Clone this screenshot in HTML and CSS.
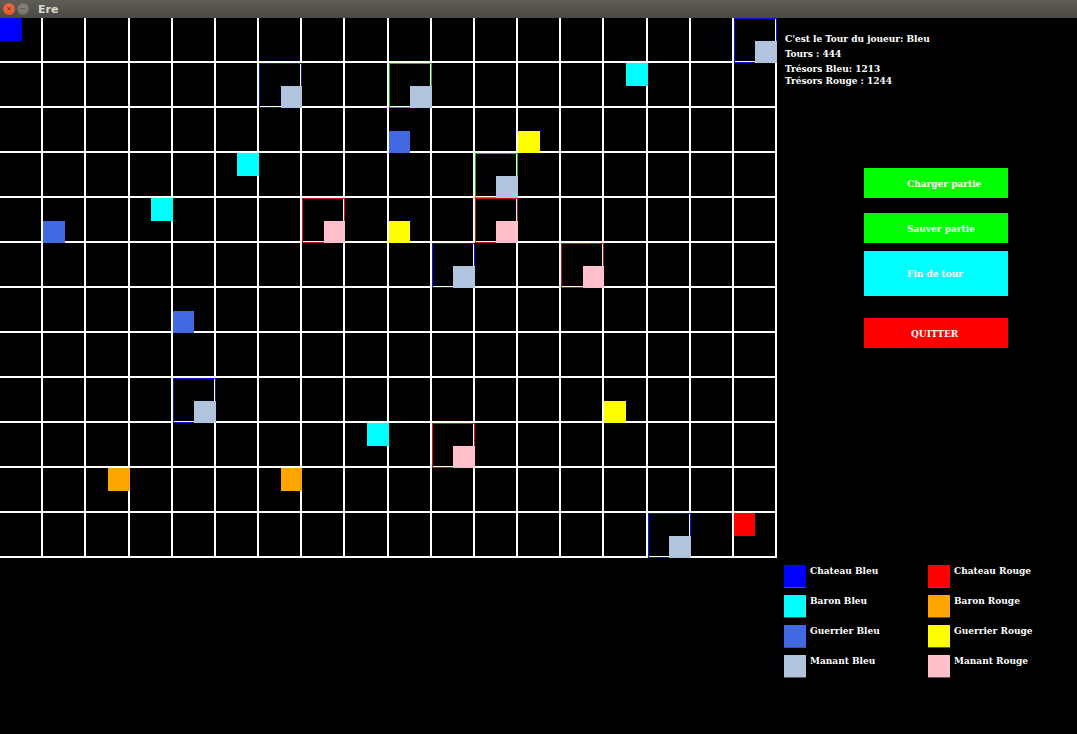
FILE: index.html
```html
<!DOCTYPE html>
<html lang="fr">
<head>
  <meta charset="UTF-8" />
  <title>Ere</title>
  <link rel="stylesheet" href="styles.css">
</head>
<body>
  <div class="titlebar">
    <span class="win-btn close">&#x2715;</span>
    <span class="win-btn minimize">&#x2212;</span>
    <span class="title">Ere</span>
  </div>

  <div class="window">
    <div id="board" class="board"></div>

    <div class="side">
      <div class="info">
        <div class="info-line">C'est le Tour du joueur: Bleu</div>
        <div class="info-line">Tours : 444</div>
        <div class="info-line">Trésors Bleu: 1213</div>
        <div class="info-line tight">Trésors Rouge : 1244</div>
      </div>

      <div class="actions">
        <button class="btn green load">Charger partie</button>
        <button class="btn green save">Sauver partie</button>
        <button class="btn cyan end">Fin de tour</button>
        <button class="btn red quit">QUITTER</button>
      </div>

      <div class="legend">
        <div class="legend-item"><span class="swatch chateau-bleu"></span>Chateau Bleu</div>
        <div class="legend-item"><span class="swatch chateau-rouge"></span>Chateau Rouge</div>
        <div class="legend-item"><span class="swatch baron-bleu"></span>Baron Bleu</div>
        <div class="legend-item"><span class="swatch baron-rouge"></span>Baron Rouge</div>
        <div class="legend-item"><span class="swatch guerrier-bleu"></span>Guerrier Bleu</div>
        <div class="legend-item"><span class="swatch guerrier-rouge"></span>Guerrier Rouge</div>
        <div class="legend-item"><span class="swatch manant-bleu"></span>Manant Bleu</div>
        <div class="legend-item"><span class="swatch manant-rouge"></span>Manant Rouge</div>
      </div>
    </div>
  </div>

  <script>
    const COLS = 18;
    const ROWS = 12;

    // [col, row, unit, owned-cell outline]
    const pieces = [
      [0, 0, 'chateau-bleu'],
      [17, 0, 'manant-bleu', 'own-blue'],
      [6, 1, 'manant-bleu', 'own-blue'],
      [9, 1, 'manant-bleu', 'own-green'],
      [14, 1, 'baron-bleu'],
      [9, 2, 'guerrier-bleu'],
      [12, 2, 'guerrier-rouge'],
      [5, 3, 'baron-bleu'],
      [11, 3, 'manant-bleu', 'own-green'],
      [3, 4, 'baron-bleu'],
      [1, 4, 'guerrier-bleu'],
      [7, 4, 'manant-rouge', 'own-red'],
      [9, 4, 'guerrier-rouge'],
      [11, 4, 'manant-rouge', 'own-red'],
      [10, 5, 'manant-bleu', 'own-blue'],
      [13, 5, 'manant-rouge', 'own-red'],
      [4, 6, 'guerrier-bleu'],
      [4, 8, 'manant-bleu', 'own-blue'],
      [14, 8, 'guerrier-rouge'],
      [8, 9, 'baron-bleu'],
      [10, 9, 'manant-rouge', 'own-red'],
      [2, 10, 'baron-rouge'],
      [6, 10, 'baron-rouge'],
      [15, 11, 'manant-bleu', 'own-blue'],
      [17, 11, 'chateau-rouge']
    ];

    const board = document.getElementById('board');
    const cells = [];
    for (let r = 0; r < ROWS; r++) {
      for (let c = 0; c < COLS; c++) {
        const cell = document.createElement('div');
        cell.className = 'cell';
        board.appendChild(cell);
        cells.push(cell);
      }
    }

    for (const [c, r, unit, own] of pieces) {
      const cell = cells[r * COLS + c];
      if (own) cell.classList.add(own);
      const p = document.createElement('span');
      p.className = 'piece ' + unit;
      cell.appendChild(p);
    }
  </script>
</body>
</html>
```

FILE: styles.css
```css
body {
  margin: 0;
  background: #000;
  color: #fff;
  font-family: "DejaVu Serif", serif;
  width: 1077px;
  height: 734px;
  overflow: hidden;
}

.titlebar {
  height: 18px;
  display: flex;
  align-items: center;
  background: linear-gradient(#5f5d58, #4a4944);
  padding-left: 3px;
  font-family: "DejaVu Sans", sans-serif;
}
.win-btn {
  width: 12px;
  height: 12px;
  border-radius: 50%;
  margin-right: 2px;
  font-size: 7px;
  line-height: 12px;
  text-align: center;
  font-weight: bold;
}
.close {
  background: radial-gradient(circle at 50% 40%, #f3774a, #d9461a);
  color: #6b2610;
}
.minimize {
  background: radial-gradient(circle at 50% 40%, #8a8883, #67655f);
  color: #4a4944;
}
.title {
  margin-left: 7px;
  font-size: 11px;
  font-weight: bold;
  color: #dcd8cf;
}

.window {
  display: flex;
}

.board {
  width: 777px;
  display: grid;
  grid-template-columns: repeat(18, 1fr);
  grid-template-rows: repeat(12, 45px);
}
.cell {
  display: grid;
  grid-template-columns: 1fr 1fr;
  grid-template-rows: 1fr 1fr;
  box-shadow: inset -2px -2px 0 #fff;
}
.cell.own-blue { box-shadow: inset 0 0 0 1px #1010e0, inset -2px -2px 0 #fff; }
.cell.own-red { box-shadow: inset 0 0 0 1px #d01010, inset -2px -2px 0 #fff; }
.cell.own-green { box-shadow: inset 0 0 0 1px #10c010, inset -2px -2px 0 #fff; }

/* quadrant of a cell per unit type */
.piece.chateau-bleu, .piece.chateau-rouge { grid-area: 1 / 1; }
.piece.baron-bleu, .piece.baron-rouge { grid-area: 1 / 2; }
.piece.guerrier-bleu, .piece.guerrier-rouge { grid-area: 2 / 1; }
.piece.manant-bleu, .piece.manant-rouge { grid-area: 2 / 2; }

.chateau-bleu { background: #0000ff; }
.baron-bleu { background: #00ffff; }
.guerrier-bleu { background: #4169e1; }
.manant-bleu { background: #b0c4de; }
.chateau-rouge { background: #ff0000; }
.baron-rouge { background: #ffa500; }
.guerrier-rouge { background: #ffff00; }
.manant-rouge { background: #ffc0cb; }

.side {
  flex: 1;
  display: flex;
  flex-direction: column;
  font-size: 10px;
  font-weight: bold;
  font-stretch: condensed;
}

.info {
  padding: 13px 0 0 8px;
}
.info-line {
  line-height: 15px;
}
.info-line.tight {
  margin-top: -3px;
}

.actions {
  margin-top: 80px;
  padding-left: 87px;
  display: flex;
  flex-direction: column;
}
.btn {
  width: 144px;
  height: 30px;
  border: none;
  padding: 0 0 0 43px;
  text-align: left;
  color: #fff;
  font-family: inherit;
  font-size: 10px;
  font-weight: bold;
  font-stretch: condensed;
}
.green { background: #00ff00; }
.cyan { background: #00ffff; }
.red { background: #ff0000; }
.save { margin-top: 15px; }
.end { margin-top: 8px; height: 45px; }
.quit { margin-top: 22px; padding-left: 47px; }

.legend {
  margin-top: 217px;
  padding-left: 7px;
  display: grid;
  grid-template-columns: 144px 144px;
  grid-auto-rows: 30px;
}
.legend-item {
  display: flex;
  align-items: flex-start;
  gap: 4px;
  line-height: 12px;
}
.swatch {
  width: 22px;
  height: 22px;
  flex-shrink: 0;
  box-shadow: 0 1px 0 #555;
}
```
